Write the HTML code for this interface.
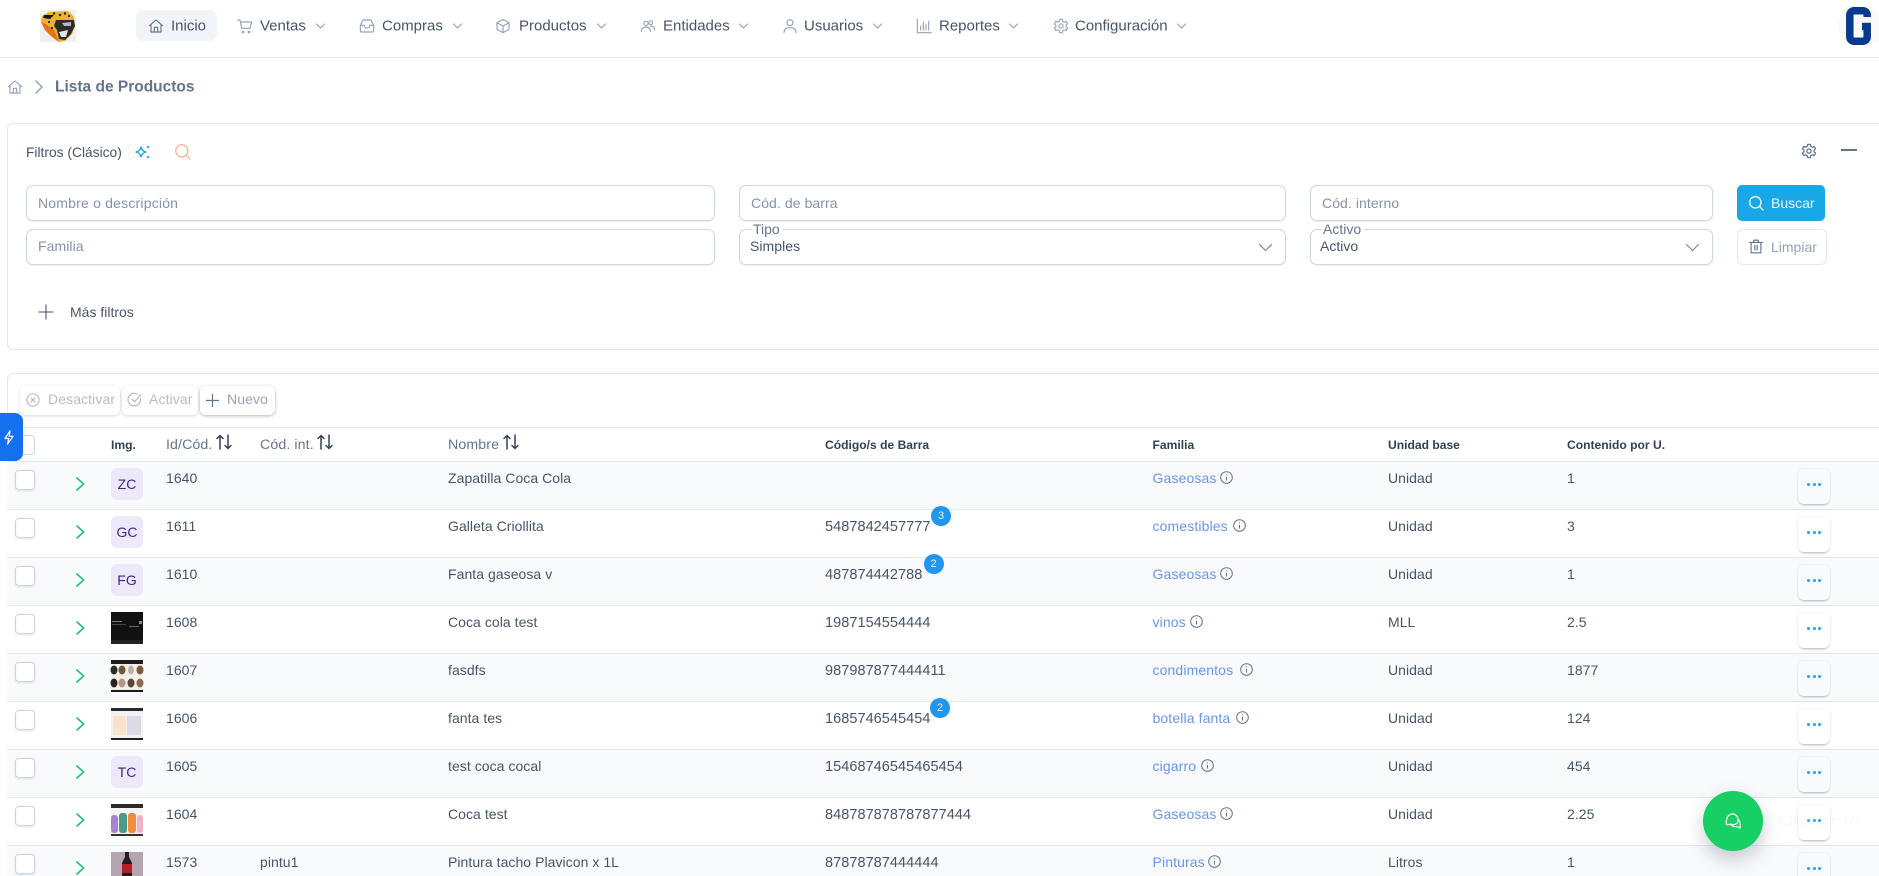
<!DOCTYPE html>
<html lang="es">
<head>
<meta charset="utf-8">
<title>Lista de Productos</title>
<style>
*{box-sizing:border-box}
html,body{margin:0;padding:0;width:1879px;height:876px;overflow:hidden;background:#fff;font-family:"Liberation Sans",sans-serif;color:#475569}
body{position:relative}
.a{position:absolute}
.t{position:absolute;white-space:nowrap;transform:translateY(-50%);line-height:1}
svg{position:absolute;overflow:visible}
.s{fill:none;stroke-linecap:round;stroke-linejoin:round}
.nav{font-size:15px;color:#475569}
.in{position:absolute;height:36px;border:1px solid #cdd7e3;border-radius:7px;background:#fff;box-shadow:0 1px 1px rgba(148,163,184,.15)}
.ph{font-size:14px;color:#8593a6;letter-spacing:.08px}
.th{font-size:12.1px;font-weight:bold;color:#334155}
.hn{font-size:14.2px;color:#64748b;letter-spacing:.1px}
.row{position:absolute;left:7px;width:1872px;height:48px;border-bottom:1.5px solid #e2e8f0}
.row.o{background:#f8fafc}
.row.e{background:#fff}
.cb{position:absolute;left:8px;top:8.5px;width:20px;height:20px;border:1px solid #cbd5e1;border-radius:4px;background:#fff;box-shadow:0 1px 2px rgba(100,116,139,.2)}
.av{position:absolute;left:104px;top:6.5px;width:32px;height:32px;border-radius:6px;background:#ede9fb;color:#3b2a85;font-size:14px;text-align:center;line-height:33px}
.c{position:absolute;white-space:nowrap;font-size:14px;color:#475569;top:16px;transform:translateY(-50%);line-height:1;letter-spacing:.05px}
.c.b{font-size:14.5px;letter-spacing:.05px;top:17px}
.c.f{color:#6a93f2;letter-spacing:.12px}
.btn{position:absolute;left:1791px;top:7px;width:32px;height:35px;border-radius:6px;box-shadow:0 2px 2px -1px rgba(71,85,105,.4),0 0 2px rgba(71,85,105,.14)}
.row.e .btn{background:#fff}
.row.o .btn{background:#f8fafc}
.btn i{position:absolute;top:14.5px;width:3.2px;height:3.2px;border-radius:50%;background:#1aa7e5}
.bd{position:absolute;width:20px;height:20px;border-radius:50%;background:#2196f0;color:#e8f4ff;font-size:11px;text-align:center;line-height:20px;z-index:2}
.ab{position:absolute;height:29px;top:386px;background:#fff;border-radius:6px;box-shadow:0 1px 3px rgba(100,116,139,.28)}
</style>
</head>
<body>

<!-- header -->
<div class="a" style="left:0;top:0;width:1879px;height:58px;border-bottom:1.5px solid #e5e7eb;background:#fff"></div>

<svg style="left:40px;top:10px" width="36" height="32" viewBox="0 0 36 32">
<rect width="36" height="32" fill="#efefef"/>
<path d="M2 6 L9 2 L28 1 L34 7 L35 16 L32 24 L25 31 L19 32 L12 27 L5 20 L1 12Z" fill="#e9b429"/>
<path d="M1 12 L6 14 L14 20 L19 32 L12 27 L5 20Z" fill="#e8701c"/>
<path d="M4 5 L14 5 L10 9 L3 8Z" fill="#151515"/>
<path d="M16 10 L34 10 L35 16 L31 24 L25 30 L19 29 L17 20 L14 16Z" fill="#2c2c2c"/>
<path d="M22 13 L31 12 L31 16 L24 16Z" fill="#b9b9b9"/>
<path d="M19 22 L28 20 L26 27 L21 27Z" fill="#e4e4e4"/>
<circle cx="14" cy="3.5" r="1.2" fill="#222"/><circle cx="20" cy="5" r="1.2" fill="#222"/><circle cx="25" cy="3.5" r="1.2" fill="#222"/><circle cx="29" cy="6" r="1.1" fill="#222"/><circle cx="9" cy="12" r="1.1" fill="#222"/><circle cx="12" cy="18" r="1.1" fill="#222"/>
</svg>

<div class="a" style="left:136px;top:10px;width:81px;height:31px;border-radius:7px;background:#f1f5f9"></div>

<!-- nav icons -->
<svg class="s" style="left:148px;top:18px" width="16" height="16" viewBox="0 0 24 24" stroke="#64748b" stroke-width="1.7"><path d="M2 11.5 12 3l10 8.500M4.500 10v11h15V10M9.500 21v-7h5v7"/></svg>
<svg class="s" style="left:237px;top:18px" width="16" height="16" viewBox="0 0 24 24" stroke="#94a3b8" stroke-width="1.7"><path d="M1 3h3.500l2.600 12.500h12.400L22 6H5.300"/><circle cx="9" cy="21" r="1.200"/><circle cx="18" cy="21" r="1.200"/></svg>
<svg class="s" style="left:359px;top:18px" width="16" height="16" viewBox="0 0 24 24" stroke="#94a3b8" stroke-width="1.7"><path d="M6 3h12l4 8v8a2 2 0 0 1-2 2H4a2 2 0 0 1-2-2v-8zM2 11h6c0 2.500 2 4 4 4s4-1.500 4-4h6"/></svg>
<svg class="s" style="left:495px;top:18px" width="16" height="16" viewBox="0 0 24 24" stroke="#94a3b8" stroke-width="1.7"><path d="M12 2 3 7v10l9 5 9-5V7zM3 7l9 5 9-5M12 12v10"/></svg>
<svg class="s" style="left:640px;top:18px" width="16" height="16" viewBox="0 0 24 24" stroke="#94a3b8" stroke-width="1.7"><circle cx="9" cy="8" r="3.200"/><circle cx="16" cy="7" r="2.800"/><path d="M2 20c.5-4 3-6.500 7-6.500s6.500 2.500 7 6.500M16 12c3.500 0 5.500 2.500 6 6"/></svg>
<svg class="s" style="left:782px;top:18px" width="16" height="16" viewBox="0 0 24 24" stroke="#94a3b8" stroke-width="1.7"><circle cx="12" cy="7" r="4.500"/><path d="M3 22c0-5 3.500-7.500 9-7.500s9 2.500 9 7.500"/></svg>
<svg class="s" style="left:916px;top:18px" width="16" height="16" viewBox="0 0 24 24" stroke="#94a3b8" stroke-width="1.7"><path d="M2 2v20h21M7 18v-6M11 18V7M15 18v-8M19 18V5"/></svg>
<svg class="s" style="left:1053px;top:18px" width="16" height="16" viewBox="0 0 24 24" stroke="#94a3b8" stroke-width="1.700"><circle cx="12" cy="12" r="3.200"/><path d="M10 2h4l.7 3 2.200 1.200 3-1 2 3.500-2.300 2v2.600l2.300 2-2 3.500-3-1L14.700 19l-.7 3h-4l-.7-3-2.200-1.200-3 1-2-3.500 2.300-2v-2.600l-2.300-2 2-3.500 3 1L9.300 5z"/></svg>

<div class="t nav" style="left:171px;top:26px">Inicio</div>
<div class="t nav" style="left:260px;top:26px">Ventas</div>
<div class="t nav" style="left:382px;top:26px">Compras</div>
<div class="t nav" style="left:519px;top:26px">Productos</div>
<div class="t nav" style="left:663px;top:26px">Entidades</div>
<div class="t nav" style="left:804px;top:26px">Usuarios</div>
<div class="t nav" style="left:939px;top:26px">Reportes</div>
<div class="t nav" style="left:1075px;top:26px">Configuración</div>

<svg class="s" style="left:316px;top:23px" width="9" height="6" viewBox="0 0 9 6" stroke="#94a3b8" stroke-width="1.200"><path d="M.5 1 4.500 5l4-4"/></svg>
<svg class="s" style="left:453px;top:23px" width="9" height="6" viewBox="0 0 9 6" stroke="#94a3b8" stroke-width="1.200"><path d="M.5 1 4.500 5l4-4"/></svg>
<svg class="s" style="left:597px;top:23px" width="9" height="6" viewBox="0 0 9 6" stroke="#94a3b8" stroke-width="1.200"><path d="M.5 1 4.500 5l4-4"/></svg>
<svg class="s" style="left:739px;top:23px" width="9" height="6" viewBox="0 0 9 6" stroke="#94a3b8" stroke-width="1.200"><path d="M.5 1 4.500 5l4-4"/></svg>
<svg class="s" style="left:873px;top:23px" width="9" height="6" viewBox="0 0 9 6" stroke="#94a3b8" stroke-width="1.200"><path d="M.5 1 4.500 5l4-4"/></svg>
<svg class="s" style="left:1009px;top:23px" width="9" height="6" viewBox="0 0 9 6" stroke="#94a3b8" stroke-width="1.200"><path d="M.5 1 4.500 5l4-4"/></svg>
<svg class="s" style="left:1177px;top:23px" width="9" height="6" viewBox="0 0 9 6" stroke="#94a3b8" stroke-width="1.200"><path d="M.5 1 4.500 5l4-4"/></svg>

<!-- G logo -->
<div class="a" style="left:1838px;top:5px;width:46px;height:41px;border-radius:50%;background:#fafafa"></div>
<svg style="left:1846px;top:7px" width="25" height="38" viewBox="0 0 25 38"><path d="M21.200 10V8A4.300 4.300 0 0 0 17 3.800H8A4.300 4.300 0 0 0 3.800 8v22A4.300 4.300 0 0 0 8 34.200h9a4.300 4.300 0 0 0 4.200-4.200V19.500H16" fill="none" stroke="#0a3a8f" stroke-width="7.500"/></svg>

<!-- breadcrumb -->
<svg class="s" style="left:7px;top:79px" width="16" height="16" viewBox="0 0 24 24" stroke="#94a3b8" stroke-width="1.700"><path d="M2 11.500 12 3l10 8.500M4.500 10v11h15V10M9.500 21v-7h5v7"/></svg>
<svg class="s" style="left:35px;top:80px" width="8" height="14" viewBox="0 0 8 14" stroke="#94a3b8" stroke-width="1.500"><path d="m1 1 6 6-6 6"/></svg>
<div class="t" style="left:55px;top:87px;font-size:15.5px;font-weight:bold;color:#64748b">Lista de Productos</div>

<!-- filter card -->
<div class="a" style="left:7px;top:123px;width:1880px;height:227px;border:1px solid #e2e8f0;border-radius:6px;background:#fff"></div>
<div class="t" style="left:26px;top:153px;font-size:13.8px;color:#475569">Filtros (Clásico)</div>
<svg style="left:135px;top:144px" width="16" height="16" viewBox="0 0 16 16"><path d="M6 3C6.600 6 8 7.500 11 8 8 8.600 6.600 10 6 13 5.400 10 4 8.600 1 8 4 7.500 5.400 6 6 3Z" fill="none" stroke="#0ea5e9" stroke-width="1.300" stroke-linejoin="round"/><path d="M13 1c.2 1.200.8 1.800 2 2-1.200.2-1.800.8-2 2-.2-1.200-.8-1.800-2-2 1.200-.2 1.800-.8 2-2ZM13 11c.2 1.200.8 1.800 2 2-1.200.2-1.800.8-2 2-.2-1.200-.8-1.800-2-2 1.200-.2 1.800-.8 2-2Z" fill="#0ea5e9"/></svg>
<svg class="s" style="left:174px;top:143px" width="17" height="17" viewBox="0 0 24 24" stroke="#fba98b" stroke-width="1.700"><circle cx="11" cy="11" r="8.500"/><path d="m17.500 17.500 5 5"/></svg>
<svg class="s" style="left:1801px;top:143px" width="16" height="16" viewBox="0 0 24 24" stroke="#64748b" stroke-width="1.900"><circle cx="12" cy="12" r="3.200"/><path d="M10 2h4l.7 3 2.200 1.200 3-1 2 3.500-2.300 2v2.600l2.300 2-2 3.500-3-1L14.700 19l-.7 3h-4l-.7-3-2.200-1.200-3 1-2-3.500 2.300-2v-2.600l-2.300-2 2-3.500 3 1L9.300 5z"/></svg>
<div class="a" style="left:1841px;top:149px;width:16px;height:2px;background:#64748b"></div>

<div class="in" style="left:26px;top:185px;width:689px"></div>
<div class="t ph" style="left:38px;top:203px;letter-spacing:.2px">Nombre o descripción</div>
<div class="in" style="left:739px;top:185px;width:547px"></div>
<div class="t ph" style="left:751px;top:203px">Cód. de barra</div>
<div class="in" style="left:1310px;top:185px;width:403px"></div>
<div class="t ph" style="left:1322px;top:203px">Cód. interno</div>

<div class="in" style="left:26px;top:229px;width:689px"></div>
<div class="t ph" style="left:38px;top:246px">Familia</div>
<div class="in" style="left:739px;top:229px;width:547px"></div>
<div class="a" style="left:752px;top:225px;width:31px;height:8px;background:#fff"></div>
<div class="t" style="left:753px;top:229px;font-size:14px;color:#64748b">Tipo</div>
<div class="t" style="left:750px;top:246px;font-size:14px;color:#475569;letter-spacing:.05px">Simples</div>
<svg class="s" style="left:1259px;top:244px" width="13" height="7" viewBox="0 0 13 7" stroke="#7b8794" stroke-width="1.200"><path d="m.5.5 6 6 6-6"/></svg>
<div class="in" style="left:1310px;top:229px;width:403px"></div>
<div class="a" style="left:1322px;top:225px;width:42px;height:8px;background:#fff"></div>
<div class="t" style="left:1323px;top:229px;font-size:14px;color:#64748b">Activo</div>
<div class="t" style="left:1320px;top:246px;font-size:14px;color:#475569">Activo</div>
<svg class="s" style="left:1686px;top:244px" width="13" height="7" viewBox="0 0 13 7" stroke="#7b8794" stroke-width="1.200"><path d="m.5.5 6 6 6-6"/></svg>

<div class="a" style="left:1737px;top:185px;width:88px;height:36px;border-radius:5px;background:#1aa7e5"></div>
<svg class="s" style="left:1748px;top:195px" width="16" height="16" viewBox="0 0 24 24" stroke="#fff" stroke-width="1.900"><circle cx="11" cy="11" r="8.500"/><path d="m17.500 17.500 5 5"/></svg>
<div class="t" style="left:1771px;top:203px;font-size:14px;color:#eaf7fe">Buscar</div>
<div class="a" style="left:1737px;top:229px;width:90px;height:36px;border:1px solid #e2e8f0;border-radius:6px;background:#fff"></div>
<svg class="s" style="left:1749px;top:239px" width="14" height="15" viewBox="0 0 24 26" stroke="#64748b" stroke-width="2"><path d="M1 6h22M8 6V2h8v4M3.500 6v18h17V6M10 11v8M14 11v8"/></svg>
<div class="t" style="left:1771px;top:247px;font-size:14px;color:#94a3b8">Limpiar</div>

<svg style="left:38px;top:304px" width="16" height="16" viewBox="0 0 16 16" stroke="#475569" stroke-width="1.100" fill="none"><path d="M8 .5v15M.5 8h15"/></svg>
<div class="t" style="left:70px;top:312px;font-size:14px;color:#475569">Más filtros</div>

<!-- table card -->
<div class="a" style="left:7px;top:373px;width:1880px;height:520px;border:1px solid #e5e7eb;border-radius:6px;background:#fff"></div>

<div class="ab" style="left:20px;width:100px"></div>
<svg class="s" style="left:26px;top:393px" width="14" height="14" viewBox="0 0 24 24" stroke="#b0b7c3" stroke-width="1.800"><circle cx="12" cy="12" r="10.500"/><path d="m8.500 8.500 7 7m0-7-7 7"/></svg>
<div class="t" style="left:48px;top:399px;font-size:14px;color:#b4bcc8;letter-spacing:.1px">Desactivar</div>
<div class="ab" style="left:122px;width:76px"></div>
<svg class="s" style="left:127px;top:392px" width="15" height="15" viewBox="0 0 24 24" stroke="#b0b7c3" stroke-width="1.800"><path d="M21.500 11a10 10 0 1 1-5-7.500"/><path d="m8 11.500 4 4 10-11"/></svg>
<div class="t" style="left:149px;top:399px;font-size:14px;color:#b4bcc8;letter-spacing:.1px">Activar</div>
<div class="ab" style="left:200px;width:75px;box-shadow:0 1px 3px rgba(71,85,105,.45)"></div>
<svg style="left:206px;top:394px" width="13" height="13" viewBox="0 0 13 13" stroke="#64748b" stroke-width="1.200" fill="none"><path d="M6.500 0v13M0 6.500h13"/></svg>
<div class="t" style="left:227px;top:399px;font-size:14px;color:#94a3b8;letter-spacing:.1px">Nuevo</div>

<!-- table head -->
<div class="a" style="left:7px;top:427px;width:1872px;height:35px;border-top:1.500px solid #e5e7eb;border-bottom:1.500px solid #e2e8f0;background:#fff"></div>
<div class="a" style="left:15px;top:435px;width:20px;height:20px;border:1px solid #cbd5e1;border-radius:4px;background:#fff"></div>
<div class="t th" style="left:111px;top:445px">Img.</div>
<div class="t hn" style="left:166px;top:445px">Id/Cód.</div>
<div class="t hn" style="left:260px;top:445px">Cód. int.</div>
<div class="t hn" style="left:448px;top:445px">Nombre</div>
<svg class="s" style="left:216px;top:434px" width="16" height="16" viewBox="0 0 16 16" stroke="#334155" stroke-width="1.500"><path d="M4 15V1.500M1 4.500l3-3 3 3M12 1v13.500M9 11.500l3 3 3-3"/></svg>
<svg class="s" style="left:317px;top:434px" width="16" height="16" viewBox="0 0 16 16" stroke="#334155" stroke-width="1.500"><path d="M4 15V1.500M1 4.500l3-3 3 3M12 1v13.500M9 11.500l3 3 3-3"/></svg>
<svg class="s" style="left:503px;top:434px" width="16" height="16" viewBox="0 0 16 16" stroke="#334155" stroke-width="1.500"><path d="M4 15V1.500M1 4.500l3-3 3 3M12 1v13.500M9 11.500l3 3 3-3"/></svg>
<div class="t th" style="left:825px;top:445px">Código/s de Barra</div>
<div class="t th" style="left:1152.5px;top:445px">Familia</div>
<div class="t th" style="left:1388px;top:445px">Unidad base</div>
<div class="t th" style="left:1567px;top:445px">Contenido por U.</div>

<!-- rows -->
<div class="row o" style="top:461.500px"><div class="cb"></div><svg class="s" style="left:69px;top:15.500px" width="9" height="14" viewBox="0 0 9 14" stroke="#22c97a" stroke-width="1.800"><path d="m1 1 6.500 6L1 13"/></svg><div class="av">ZC</div><div class="c" style="left:159px">1640</div><div class="c" style="left:441px">Zapatilla Coca Cola</div><div class="c f" style="left:1145.500px">Gaseosas</div><svg style="left:1213px;top:9.500px" width="13" height="13" viewBox="0 0 13 13"><circle cx="6.500" cy="6.500" r="5.800" fill="none" stroke="#64748b"/><path d="M6.500 5.800v3.700M6.500 3.300v1" stroke="#64748b" fill="none"/></svg><div class="c" style="left:1381px">Unidad</div><div class="c" style="left:1560px">1</div><div class="btn"><i style="left:9px"></i><i style="left:14.500px"></i><i style="left:20px"></i></div></div>

<div class="row e" style="top:509.500px"><div class="cb"></div><svg class="s" style="left:69px;top:15.500px" width="9" height="14" viewBox="0 0 9 14" stroke="#22c97a" stroke-width="1.800"><path d="m1 1 6.500 6L1 13"/></svg><div class="av">GC</div><div class="c" style="left:159px">1611</div><div class="c" style="left:441px">Galleta Criollita</div><div class="c b" style="left:818px">5487842457777</div><div class="c f" style="left:1145.500px">comestibles</div><svg style="left:1226px;top:9.500px" width="13" height="13" viewBox="0 0 13 13"><circle cx="6.500" cy="6.500" r="5.800" fill="none" stroke="#64748b"/><path d="M6.500 5.800v3.700M6.500 3.300v1" stroke="#64748b" fill="none"/></svg><div class="c" style="left:1381px">Unidad</div><div class="c" style="left:1560px">3</div><div class="btn"><i style="left:9px"></i><i style="left:14.500px"></i><i style="left:20px"></i></div></div>

<div class="row o" style="top:557.500px"><div class="cb"></div><svg class="s" style="left:69px;top:15.500px" width="9" height="14" viewBox="0 0 9 14" stroke="#22c97a" stroke-width="1.800"><path d="m1 1 6.500 6L1 13"/></svg><div class="av">FG</div><div class="c" style="left:159px">1610</div><div class="c" style="left:441px">Fanta gaseosa v</div><div class="c b" style="left:818px">487874442788</div><div class="c f" style="left:1145.500px">Gaseosas</div><svg style="left:1213px;top:9.500px" width="13" height="13" viewBox="0 0 13 13"><circle cx="6.500" cy="6.500" r="5.800" fill="none" stroke="#64748b"/><path d="M6.500 5.800v3.700M6.500 3.300v1" stroke="#64748b" fill="none"/></svg><div class="c" style="left:1381px">Unidad</div><div class="c" style="left:1560px">1</div><div class="btn"><i style="left:9px"></i><i style="left:14.500px"></i><i style="left:20px"></i></div></div>

<div class="row e" style="top:605.500px"><div class="cb"></div><svg class="s" style="left:69px;top:15.500px" width="9" height="14" viewBox="0 0 9 14" stroke="#22c97a" stroke-width="1.800"><path d="m1 1 6.500 6L1 13"/></svg>
<svg style="left:104px;top:6.500px" width="32" height="32" viewBox="0 0 32 32"><rect width="32" height="32" fill="#111"/><rect y="28" width="32" height="4" fill="#222"/><rect x="1" y="9" width="10" height="1" fill="#777"/><rect x="1" y="12" width="14" height="1" fill="#444"/><rect x="18" y="14" width="10" height="1" fill="#666"/><rect x="28" y="9" width="3" height="3" fill="#888"/></svg>
<div class="c" style="left:159px">1608</div><div class="c" style="left:441px">Coca cola test</div><div class="c b" style="left:818px">1987154554444</div><div class="c f" style="left:1145.500px">vinos</div><svg style="left:1182.500px;top:9.500px" width="13" height="13" viewBox="0 0 13 13"><circle cx="6.500" cy="6.500" r="5.800" fill="none" stroke="#64748b"/><path d="M6.500 5.800v3.700M6.500 3.300v1" stroke="#64748b" fill="none"/></svg><div class="c" style="left:1381px">MLL</div><div class="c" style="left:1560px">2.5</div><div class="btn"><i style="left:9px"></i><i style="left:14.500px"></i><i style="left:20px"></i></div></div>

<div class="row o" style="top:653.500px"><div class="cb"></div><svg class="s" style="left:69px;top:15.500px" width="9" height="14" viewBox="0 0 9 14" stroke="#22c97a" stroke-width="1.800"><path d="m1 1 6.500 6L1 13"/></svg>
<svg style="left:104px;top:6.500px" width="32" height="32" viewBox="0 0 32 32"><rect width="32" height="32" fill="#f4efe9"/><rect width="32" height="4" fill="#1c1c1c"/><rect y="30" width="32" height="2" fill="#1c1c1c"/><ellipse cx="3" cy="10" rx="3.500" ry="4.500" fill="#2d2a28"/><ellipse cx="11" cy="10" rx="3.500" ry="4.500" fill="#6b5a3a"/><ellipse cx="20" cy="10" rx="3" ry="4.500" fill="#bcb3a6"/><ellipse cx="29" cy="10" rx="3.500" ry="4.500" fill="#7a5a3a"/><ellipse cx="3" cy="23" rx="3.500" ry="4.500" fill="#2a2220"/><ellipse cx="11" cy="23" rx="3.500" ry="4.500" fill="#b19a80"/><ellipse cx="20" cy="23" rx="3.500" ry="4.500" fill="#5c4436"/><ellipse cx="29" cy="23" rx="3.500" ry="4.500" fill="#8a6c58"/></svg>
<div class="c" style="left:159px">1607</div><div class="c" style="left:441px">fasdfs</div><div class="c b" style="left:818px">987987877444411</div><div class="c f" style="left:1145.500px">condimentos</div><svg style="left:1233px;top:9.500px" width="13" height="13" viewBox="0 0 13 13"><circle cx="6.500" cy="6.500" r="5.800" fill="none" stroke="#64748b"/><path d="M6.500 5.800v3.700M6.500 3.300v1" stroke="#64748b" fill="none"/></svg><div class="c" style="left:1381px">Unidad</div><div class="c" style="left:1560px">1877</div><div class="btn"><i style="left:9px"></i><i style="left:14.500px"></i><i style="left:20px"></i></div></div>

<div class="row e" style="top:701.500px"><div class="cb"></div><svg class="s" style="left:69px;top:15.500px" width="9" height="14" viewBox="0 0 9 14" stroke="#22c97a" stroke-width="1.800"><path d="m1 1 6.500 6L1 13"/></svg>
<svg style="left:104px;top:6.500px" width="32" height="32" viewBox="0 0 32 32"><rect width="32" height="32" fill="#f3f1f2"/><rect width="32" height="3" fill="#2a2a2a"/><rect y="30" width="32" height="2" fill="#222"/><rect x="2" y="8" width="13" height="19" fill="#fbe3cb"/><rect x="16" y="8" width="14" height="19" fill="#dcdae2"/></svg>
<div class="c" style="left:159px">1606</div><div class="c" style="left:441px">fanta tes</div><div class="c b" style="left:818px">1685746545454</div><div class="c f" style="left:1145.500px">botella fanta</div><svg style="left:1229px;top:9.500px" width="13" height="13" viewBox="0 0 13 13"><circle cx="6.500" cy="6.500" r="5.800" fill="none" stroke="#64748b"/><path d="M6.500 5.800v3.700M6.500 3.300v1" stroke="#64748b" fill="none"/></svg><div class="c" style="left:1381px">Unidad</div><div class="c" style="left:1560px">124</div><div class="btn"><i style="left:9px"></i><i style="left:14.500px"></i><i style="left:20px"></i></div></div>

<div class="row o" style="top:749.500px"><div class="cb"></div><svg class="s" style="left:69px;top:15.500px" width="9" height="14" viewBox="0 0 9 14" stroke="#22c97a" stroke-width="1.800"><path d="m1 1 6.500 6L1 13"/></svg><div class="av">TC</div><div class="c" style="left:159px">1605</div><div class="c" style="left:441px">test coca cocal</div><div class="c b" style="left:818px">15468746545465454</div><div class="c f" style="left:1145.500px">cigarro</div><svg style="left:1194px;top:9.500px" width="13" height="13" viewBox="0 0 13 13"><circle cx="6.500" cy="6.500" r="5.800" fill="none" stroke="#64748b"/><path d="M6.500 5.800v3.700M6.500 3.300v1" stroke="#64748b" fill="none"/></svg><div class="c" style="left:1381px">Unidad</div><div class="c" style="left:1560px">454</div><div class="btn"><i style="left:9px"></i><i style="left:14.500px"></i><i style="left:20px"></i></div></div>

<div class="row e" style="top:797.500px"><div class="cb"></div><svg class="s" style="left:69px;top:15.500px" width="9" height="14" viewBox="0 0 9 14" stroke="#22c97a" stroke-width="1.800"><path d="m1 1 6.500 6L1 13"/></svg>
<svg style="left:104px;top:6.500px" width="32" height="32" viewBox="0 0 32 32"><rect width="32" height="32" fill="#f7f3ee"/><rect width="32" height="4" fill="#2a2a2a"/><rect y="30" width="32" height="2" fill="#333"/><rect y="11" width="7" height="18" rx="3" fill="#a583cf"/><rect x="8" y="9" width="8" height="20" rx="3" fill="#4a9a87"/><rect x="17" y="9" width="8" height="20" rx="3" fill="#f58a3c"/><rect x="26" y="11" width="6" height="18" rx="3" fill="#f2b3c8"/></svg>
<div class="c" style="left:159px">1604</div><div class="c" style="left:441px">Coca test</div><div class="c b" style="left:818px">848787878787877444</div><div class="c f" style="left:1145.500px">Gaseosas</div><svg style="left:1213px;top:9.500px" width="13" height="13" viewBox="0 0 13 13"><circle cx="6.500" cy="6.500" r="5.800" fill="none" stroke="#64748b"/><path d="M6.500 5.800v3.700M6.500 3.300v1" stroke="#64748b" fill="none"/></svg><div class="c" style="left:1381px">Unidad</div><div class="c" style="left:1560px">2.25</div><div class="btn"><i style="left:9px"></i><i style="left:14.500px"></i><i style="left:20px"></i></div></div>

<div class="row o" style="top:845.500px"><div class="cb"></div><svg class="s" style="left:69px;top:15.500px" width="9" height="14" viewBox="0 0 9 14" stroke="#22c97a" stroke-width="1.800"><path d="m1 1 6.500 6L1 13"/></svg>
<svg style="left:104px;top:6.500px" width="32" height="32" viewBox="0 0 32 32"><rect width="32" height="32" fill="#b5a5b3"/><path d="M14 0h4v5l3 6v21H11V11l3-6Z" fill="#2a1a1c"/><rect x="11" y="12" width="10" height="9" fill="#b3202a"/></svg>
<div class="c" style="left:159px">1573</div><div class="c" style="left:253px">pintu1</div><div class="c" style="left:441px">Pintura tacho Plavicon x 1L</div><div class="c b" style="left:818px">87878787444444</div><div class="c f" style="left:1145.500px">Pinturas</div><svg style="left:1201px;top:9.500px" width="13" height="13" viewBox="0 0 13 13"><circle cx="6.500" cy="6.500" r="5.800" fill="none" stroke="#64748b"/><path d="M6.500 5.800v3.700M6.500 3.300v1" stroke="#64748b" fill="none"/></svg><div class="c" style="left:1381px">Litros</div><div class="c" style="left:1560px">1</div><div class="btn"><i style="left:9px"></i><i style="left:14.500px"></i><i style="left:20px"></i></div></div>

<!-- badges -->
<div class="bd" style="left:931px;top:506px">3</div>
<div class="bd" style="left:923.500px;top:554px">2</div>
<div class="bd" style="left:930px;top:698px">2</div>

<!-- lightning tab -->
<div class="a" style="left:0;top:413px;width:23px;height:48px;border-radius:0 8px 8px 0;background:#1570ef;z-index:3"></div>
<svg class="s" style="left:4px;top:430px;z-index:4" width="10" height="15" viewBox="0 0 10 15" stroke="#fff" stroke-width="1.200"><path d="M6 .8 1 8.500h3.700L3.500 14.200 9 6.300H5.200Z"/></svg>

<!-- chat fab -->
<div class="t" style="left:1778px;top:821px;font-size:15px;color:rgba(226,232,240,.28);z-index:5;letter-spacing:.2px">Chat con IA</div>
<div class="a" style="left:1703px;top:791px;width:60px;height:60px;border-radius:50%;background:#18cf63;box-shadow:0 8px 18px rgba(71,85,105,.3);z-index:5"></div>
<svg class="s" style="left:1725px;top:813px;z-index:6" width="16" height="16" viewBox="0 0 16 16" stroke="#fff" stroke-width="1.200"><path d="M1.500 11.500C.500 6 3 1 7.500 1c4 0 6 3.500 5.500 7-.400 2.500-3 4-5.500 3.500Z"/><path d="M13 6c2 2 2.500 5 2 9l-3.500-1.500c-2.500.5-5-.5-6-2.500"/></svg>

</body>
</html>
